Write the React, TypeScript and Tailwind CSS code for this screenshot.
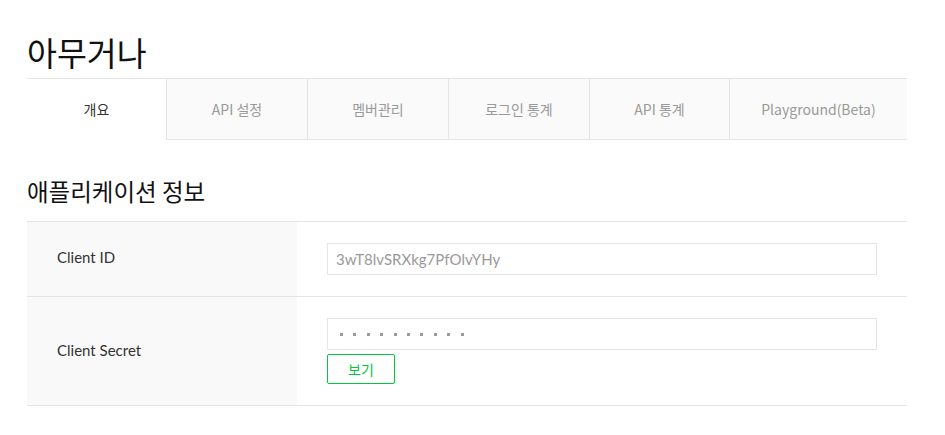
const tabs = [
  { label: '개요', w: 'w-[139px]', active: true },
  { label: 'API 설정', w: 'w-[141px]' },
  { label: '멤버관리', w: 'w-[141px]' },
  { label: '로그인 통계', w: 'w-[141px]' },
  { label: 'API 통계', w: 'w-[140px]' },
  { label: 'Playground(Beta)', w: 'flex-1' },
];

export default function App() {
  return (
    <div className="min-h-[435px] bg-white font-['Noto_Sans_CJK_KR','Noto_Sans',sans-serif]">
      <div className="mx-[27px] w-[880px]">
        <h1 className="pt-[31px] pb-[6px] text-[32.5px] leading-[41px] font-normal text-[#111]">
          아무거나
        </h1>

        <div className="flex border-t border-[#e5e5e5]">
          {tabs.map((t) => (
            <div
              key={t.label}
              className={
                t.active
                  ? `${t.w} h-[60px] flex items-center justify-center text-[14px] text-[#333] bg-white`
                  : `${t.w} h-[61px] flex items-center justify-center text-[14px] text-[#999] bg-[#fafafa] border-l border-b border-[#e5e5e5]`
              }
            >
              {t.label}
            </div>
          ))}
        </div>

        <h2 className="mt-[35px] text-[23.5px] leading-[32px] font-normal text-[#111]">
          애플리케이션 정보
        </h2>

        <div className="mt-[14px] border-t border-[#e5e5e5]">
          <div className="flex border-b border-[#e5e5e5]">
            <div className="w-[270px] bg-[#f9f9f9] flex items-center pl-[30px] pb-[3px] text-[15px] text-[#333] font-['Lato','Noto_Sans_CJK_KR',sans-serif]">
              Client ID
            </div>
            <div className="flex-1 pl-[30px] pr-[30px] py-[21px]">
              <div className="h-[32px] border border-[#e5e5e5] flex items-center px-[8px] text-[15px] text-[#999] font-['Lato','Noto_Sans_CJK_KR',sans-serif]">
                3wT8lvSRXkg7PfOlvYHy
              </div>
            </div>
          </div>

          <div className="flex border-b border-[#e5e5e5]">
            <div className="w-[270px] bg-[#f9f9f9] flex items-center pl-[30px] pb-[2px] text-[15px] text-[#333] font-['Lato','Noto_Sans_CJK_KR',sans-serif]">
              Client Secret
            </div>
            <div className="flex-1 pl-[30px] pr-[30px] pt-[21px] pb-[21px]">
              <div className="h-[32px] border border-[#e5e5e5] flex items-center gap-[10.4px] pl-[12px]">
                {Array.from({ length: 10 }).map((_, i) => (
                  <span key={i} className="w-[3px] h-[3px] bg-[#9a9a9a]" />
                ))}
              </div>
              <button className="mt-[4px] w-[68px] h-[30px] border border-[#00c73c] rounded-[2px] bg-white text-[14px] text-[#00c73c]">
                보기
              </button>
            </div>
          </div>
        </div>
      </div>
    </div>
  );
}
